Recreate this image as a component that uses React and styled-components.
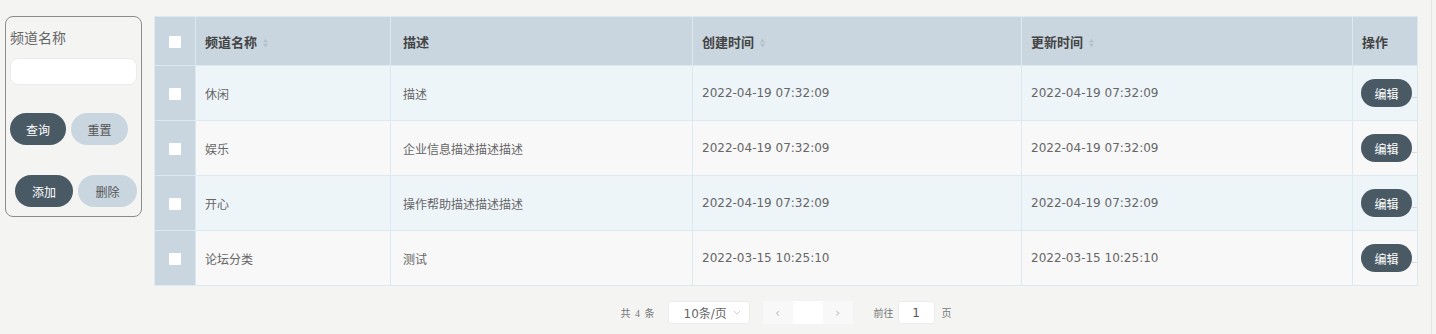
import React from 'react';
import styled, { createGlobalStyle } from 'styled-components';

const GlobalStyle = createGlobalStyle`
  html, body {
    margin: 0;
    padding: 0;
    background: #f4f4f3;
  }
  body {
    font-family: "DejaVu Sans", "Noto Sans CJK SC", sans-serif;
    color: #555;
  }
`;

const rows = [
  { id: 1, name: '休闲', desc: '描述', created: '2022-04-19 07:32:09', updated: '2022-04-19 07:32:09' },
  { id: 2, name: '娱乐', desc: '企业信息描述描述描述', created: '2022-04-19 07:32:09', updated: '2022-04-19 07:32:09' },
  { id: 3, name: '开心', desc: '操作帮助描述描述描述', created: '2022-04-19 07:32:09', updated: '2022-04-19 07:32:09' },
  { id: 4, name: '论坛分类', desc: '测试', created: '2022-03-15 10:25:10', updated: '2022-03-15 10:25:10' },
];

const columns = [
  { key: 'check', width: 41 },
  { key: 'name', title: '频道名称', width: 195, sort: true },
  { key: 'desc', title: '描述', width: 302, pad: 12 },
  { key: 'created', title: '创建时间', width: 329, sort: true },
  { key: 'updated', title: '更新时间', width: 331, sort: true },
  { key: 'ops', title: '操作', width: 65 },
];

const App = () => {
  return (
    <Page>
      <GlobalStyle />
      <SearchPanel>
        <Label>频道名称</Label>
        <SearchInput />
        <ButtonRow top={28} left={0}>
          <PillButton dark width={56}>查询</PillButton>
          <PillButton width={57}>重置</PillButton>
        </ButtonRow>
        <ButtonRow top={30} left={5}>
          <PillButton dark width={58}>添加</PillButton>
          <PillButton width={59}>删除</PillButton>
        </ButtonRow>
      </SearchPanel>

      <Main>
        <Table>
          <colgroup>
            {columns.map((c) => (<col key={c.key} style={{ width: c.width }} />))}
          </colgroup>
          <thead>
            <tr>
              <CheckCell as="th"><Checkbox /></CheckCell>
              {columns.slice(1).map((c) => (
                <HeadCell key={c.key} pad={c.pad}>
                  {c.title}
                  {c.sort && <SortIcon />}
                </HeadCell>
              ))}
            </tr>
          </thead>
          <tbody>
            {rows.map((r, i) => (
              <Row key={r.id} odd={i % 2 === 0}>
                <CheckCell><Checkbox /></CheckCell>
                <Cell>{r.name}</Cell>
                <Cell pad={12}>{r.desc}</Cell>
                <Cell>{r.created}</Cell>
                <Cell>{r.updated}</Cell>
                <OpsCell>
                  <OpsInner>
                    <EditButton>编辑</EditButton>
                    <Dots>…</Dots>
                  </OpsInner>
                </OpsCell>
              </Row>
            ))}
          </tbody>
        </Table>

        <Pagination>
          <Total>共 4 条</Total>
          <SizeSelect>
            <span>10条/页</span>
            <Chevron viewBox="0 0 10 6">
              <path d="M1 1 L5 5 L9 1" fill="none" stroke="#c0c4cc" strokeWidth="1" />
            </Chevron>
          </SizeSelect>
          <Pager>
            <PagerArrow>‹</PagerArrow>
            <PagerCurrent />
            <PagerArrow>›</PagerArrow>
          </Pager>
          <JumpText>前往</JumpText>
          <JumpInput>1</JumpInput>
          <PageText>页</PageText>
        </Pagination>
      </Main>
    </Page>
  );
};

const SortIcon = () => (
  <SortSvg viewBox="0 0 8 12">
    <path d="M4 1 L7 5 L1 5 Z" fill="#b4bfc7" />
    <path d="M4 11 L7 7 L1 7 Z" fill="#b4bfc7" />
  </SortSvg>
);

const Page = styled.div`
  display: flex;
  align-items: flex-start;
  width: 1432px;
  height: 334px;
  box-sizing: border-box;
  padding: 15px 0 0 5px;
  border-right: 1px solid #e4e4e4;
`;

const SearchPanel = styled.div`
  width: 137px;
  height: 201px;
  box-sizing: border-box;
  border: 1.5px solid #8c8c8c;
  border-radius: 8px;
  padding: 11px 4px 0 4px;
  margin-top: 1px;
  display: flex;
  flex-direction: column;
`;

const Label = styled.div`
  font-size: 14px;
  color: #666;
  line-height: 20px;
`;

const SearchInput = styled.div`
  margin-top: 10px;
  height: 25px;
  background: #fff;
  border: 1px solid #ececec;
  border-radius: 8px;
`;

const ButtonRow = styled.div`
  display: flex;
  gap: 5px;
  margin-top: ${(p) => p.top}px;
  padding-left: ${(p) => p.left}px;
`;

const PillButton = styled.div`
  width: ${(p) => p.width}px;
  height: 32px;
  border-radius: 16px;
  background: ${(p) => (p.dark ? '#4a5a65' : '#c9d6df')};
  color: ${(p) => (p.dark ? '#fff' : '#555')};
  font-size: 12px;
  display: flex;
  align-items: center;
  justify-content: center;
`;

const Main = styled.div`
  margin-left: 12px;
  display: flex;
  flex-direction: column;
  align-items: center;
  margin-top: 1px;
`;

const Table = styled.table`
  border-collapse: collapse;
  table-layout: fixed;
  width: 1263px;
`;

const HeadCell = styled.th`
  height: 48px;
  background: #c9d6df;
  border: 1px solid #dde9f1;
  text-align: left;
  padding: 0 ${(p) => p.pad || 9}px;
  font-size: 13px;
  font-weight: bold;
  color: #444;
  white-space: nowrap;
`;

const SortSvg = styled.svg`
  width: 7px;
  height: 10px;
  margin-left: 5px;
  vertical-align: -1px;
`;

const Row = styled.tr`
  background: ${(p) => (p.odd ? '#eef5f9' : '#f8f8f8')};
`;

const Cell = styled.td`
  height: 54px;
  border: 1px solid #dde9f1;
  padding: 0 ${(p) => p.pad || 9}px;
  font-size: 12px;
  color: #666;
  white-space: nowrap;
`;

const CheckCell = styled.td`
  background: #c9d6df;
  border: 1px solid #dde9f1;
  padding: 0;
  text-align: center;
`;

const Checkbox = styled.span`
  display: inline-block;
  width: 12px;
  height: 12px;
  background: #fff;
  border-radius: 1px;
  vertical-align: middle;
`;

const OpsCell = styled(Cell)`
  padding: 0 0 0 8px;
`;

const OpsInner = styled.div`
  display: flex;
  align-items: center;
  overflow: hidden;
`;

const EditButton = styled.div`
  flex: none;
  width: 51px;
  height: 28px;
  border-radius: 14px;
  background: #4a5a65;
  color: #fff;
  font-size: 12px;
  display: flex;
  align-items: center;
  justify-content: center;
`;

const Dots = styled.span`
  flex: none;
  font-size: 6px;
  color: #888;
  margin-top: 4px;
`;

const Pagination = styled.div`
  display: flex;
  align-items: center;
  margin-top: 15px;
  height: 23px;
  font-size: 12px;
  color: #666;
`;

const Total = styled.span`
  font-family: "Liberation Serif", "Noto Sans CJK SC", serif;
  font-size: 10px;
  word-spacing: 2px;
  color: #777;
  margin-right: 13px;
`;

const SizeSelect = styled.div`
  width: 82px;
  height: 23px;
  box-sizing: border-box;
  background: #fff;
  border: 1px solid #ececec;
  border-radius: 3px;
  display: flex;
  align-items: center;
  justify-content: space-between;
  padding: 0 8px 0 15px;
  font-size: 12px;
  color: #666;
`;

const Chevron = styled.svg`
  width: 8px;
  height: 5px;
`;

const Pager = styled.div`
  display: flex;
  margin-left: 13px;
  height: 23px;
`;

const PagerArrow = styled.div`
  width: 30px;
  height: 23px;
  background: #f8f8f8;
  color: #c0c4cc;
  font-size: 13px;
  display: flex;
  align-items: center;
  justify-content: center;
`;

const PagerCurrent = styled.div`
  width: 30px;
  height: 23px;
  background: #fff;
`;

const JumpText = styled.span`
  font-family: "Liberation Serif", "Noto Sans CJK SC", serif;
  font-size: 10px;
  color: #777;
  margin-left: 21px;
`;

const PageText = styled(JumpText)`
  margin-left: 0;
`;

const JumpInput = styled.div`
  width: 37px;
  height: 23px;
  box-sizing: border-box;
  background: #fff;
  border: 1px solid #ececec;
  border-radius: 3px;
  margin: 0 7px 0 4px;
  display: flex;
  align-items: center;
  justify-content: center;
  font-size: 12px;
  color: #555;
`;

export default App;
